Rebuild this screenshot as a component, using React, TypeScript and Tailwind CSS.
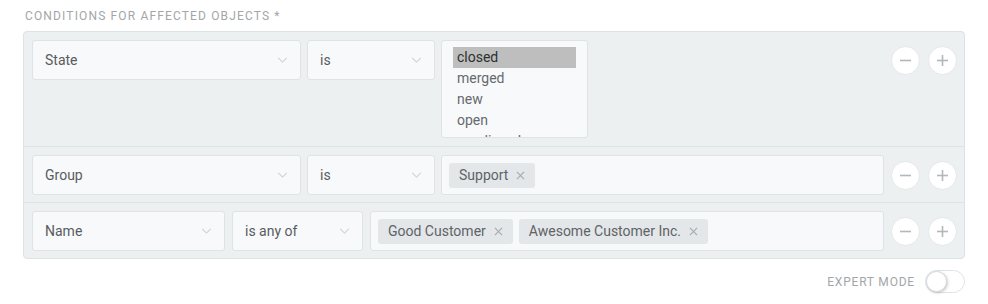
import { ReactNode } from 'react';

const font = { fontFamily: 'Roboto, "Liberation Sans", sans-serif' };

function Chevron() {
  return (
    <svg className="w-[11px] h-[6px] shrink-0" viewBox="0 0 12 7" fill="none" stroke="#cdd1d4" strokeWidth={1.2}>
      <path d="M1 1l5 5 5-5" />
    </svg>
  );
}

function Select({ value, w }: { value: string; w: string }) {
  return (
    <div className={`${w} h-[40px] shrink-0 flex items-center justify-between pl-[12px] pr-[12px] bg-[#f8f9fa] border border-[#dfe3e6] rounded-[3px] text-[14px] text-[#585c5f]`}>
      <span>{value}</span>
      <Chevron />
    </div>
  );
}

function Tag({ children }: { children: ReactNode }) {
  return (
    <div className="h-[25px] flex items-center gap-[8px] px-[10px] rounded-[3px] bg-[#e3e7e9] text-[14px] text-[#5f6366]">
      <span>{children}</span>
      <svg className="w-[9px] h-[9px]" viewBox="0 0 10 10" stroke="#a6abae" strokeWidth={1.3}>
        <path d="M1 1l8 8M9 1l-8 8" />
      </svg>
    </div>
  );
}

function RoundBtn({ plus }: { plus?: boolean }) {
  return (
    <div className="w-[29px] h-[29px] rounded-full bg-white border border-[#e4e8ea] flex items-center justify-center shrink-0">
      <svg className="w-[11px] h-[11px]" viewBox="0 0 11 11" stroke="#b3b7ba" strokeWidth={1.6}>
        <path d="M0 5.5h11" />
        {plus && <path d="M5.5 0v11" />}
      </svg>
    </div>
  );
}

function Buttons() {
  return (
    <div className="ml-auto flex items-center gap-[8px] h-[40px]">
      <RoundBtn />
      <RoundBtn plus />
    </div>
  );
}

export default function App() {
  const states = ['closed', 'merged', 'new', 'open', 'pending close'];
  return (
    <div className="w-[988px] h-[304px] bg-white px-[23px] pt-[10px]" style={font}>
      <div className="text-[12px] leading-[12px] tracking-[1.15px] text-[#a3a6a8] pl-[2px] mb-[9px]">
        CONDITIONS FOR AFFECTED OBJECTS *
      </div>
      <div className="w-[942px] bg-[#edf0f1] border border-[#dde2e4] rounded-[4px]">
        {/* row 1 */}
        <div className="flex items-start gap-[6px] px-[8px] pr-[7px] pt-[8px] pb-[8px] border-b border-[#dde2e4]">
          <Select value="State" w="w-[269px]" />
          <Select value="is" w="w-[128px]" />
          <div className="w-[147px] h-[98px] bg-[#f8f9fa] border border-[#dfe3e6] rounded-[3px] overflow-hidden pl-[11px] pr-[11px] pt-[6px]">
            {states.map((s, i) => (
              <div
                key={s}
                className={`h-[21px] leading-[21px] pl-[4px] text-[14px] whitespace-nowrap ${i === 0 ? 'bg-[#bebebe] text-[#2e2e2e]' : 'text-[#666a6d]'}`}
              >
                {s}
              </div>
            ))}
          </div>
          <Buttons />
        </div>
        {/* row 2 */}
        <div className="flex items-center gap-[6px] px-[8px] pr-[7px] pt-[8px] pb-[7px] border-b border-[#dde2e4]">
          <Select value="Group" w="w-[269px]" />
          <Select value="is" w="w-[128px]" />
          <div className="w-[443px] h-[40px] shrink-0 flex items-center gap-[6px] pl-[7px] bg-[#f8f9fa] border border-[#dfe3e6] rounded-[3px]">
            <Tag>Support</Tag>
          </div>
          <Buttons />
        </div>
        {/* row 3 */}
        <div className="flex items-center gap-[7px] px-[8px] pr-[7px] pt-[8px] pb-[7px]">
          <Select value="Name" w="w-[193px]" />
          <Select value="is any of" w="w-[131px]" />
          <div className="w-[514px] h-[40px] shrink-0 flex items-center gap-[6px] pl-[7px] bg-[#f8f9fa] border border-[#dfe3e6] rounded-[3px]">
            <Tag>Good Customer</Tag>
            <Tag>Awesome Customer Inc.</Tag>
          </div>
          <Buttons />
        </div>
      </div>
      <div className="flex items-center justify-end gap-[10px] mt-[11px] w-[942px]">
        <span className="text-[12px] tracking-[0.8px] text-[#a3a6a8]">EXPERT MODE</span>
        <div className="w-[40px] h-[23px] rounded-full bg-white border border-[#dfe3e6] relative">
          <div className="absolute left-0 top-0 w-[21px] h-[21px] rounded-full bg-white border border-[#d5d9dc] shadow-[1px_1px_3px_rgba(0,0,0,0.2)]" />
        </div>
      </div>
    </div>
  );
}
